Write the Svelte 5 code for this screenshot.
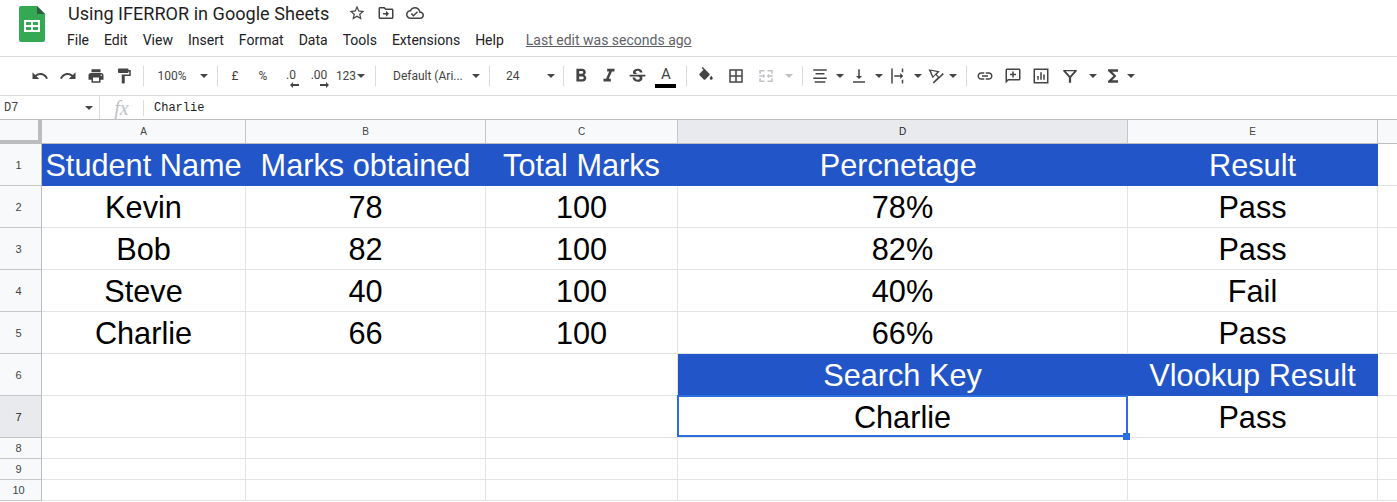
<script>
  const menus = ["File", "Edit", "View", "Insert", "Format", "Data", "Tools", "Extensions", "Help"];

  const paths = {
    undo: "M12.5 8c-2.65 0-5.05.99-6.9 2.6L2 7v9h9l-3.62-3.62c1.39-1.16 3.16-1.88 5.12-1.88 3.54 0 6.55 2.31 7.6 5.5l2.37-.78C21.08 11.03 17.15 8 12.5 8z",
    redo: "M18.4 10.6C16.55 8.99 14.15 8 11.5 8c-4.65 0-8.58 3.03-9.96 7.22L3.9 16c1.05-3.19 4.05-5.5 7.6-5.5 1.95 0 3.73.72 5.12 1.88L13 16h9V7l-3.6 3.6z",
    print: "M19 8H5c-1.66 0-3 1.34-3 3v6h4v4h12v-4h4v-6c0-1.66-1.34-3-3-3zm-3 11H8v-5h8v5zm3-7c-.55 0-1-.45-1-1s.45-1 1-1 1 .45 1 1-.45 1-1 1zm-1-9H6v4h12V3z",
    paint: "M18 4V3c0-.55-.45-1-1-1H5c-.55 0-1 .45-1 1v4c0 .55.45 1 1 1h12c.55 0 1-.45 1-1V6h1v4H9v11c0 .55.45 1 1 1h2c.55 0 1-.45 1-1v-9h8V4h-3z",
    bold: "M15.6 10.79c.97-.67 1.65-1.77 1.65-2.79 0-2.26-1.75-4-4-4H7v14h7.04c2.09 0 3.71-1.7 3.71-3.79 0-1.52-.86-2.82-2.15-3.42zM10 6.5h3c.83 0 1.5.67 1.5 1.5s-.67 1.5-1.5 1.5h-3v-3zm3.5 9H10v-3h3.5c.83 0 1.5.67 1.5 1.5s-.67 1.5-1.5 1.5z",
    italic: "M10 4v3h2.21l-3.42 8H6v3h8v-3h-2.21l3.42-8H18V4z",
    strike: "M6.85 7.08C6.85 4.37 9.45 3 12.24 3c1.64 0 3 .49 3.9 1.28.77.65 1.46 1.73 1.46 3.24h-3.01c0-.31-.05-.59-.15-.85-.29-.86-1.2-1.28-2.25-1.28-1.86 0-2.34 1.02-2.34 1.7 0 .48.25.88.74 1.21.38.25.77.48 1.41.7H7.39c-.21-.34-.54-.89-.54-1.92zM21 12v-2H3v2h9.62c1.15.45 1.96.75 1.96 1.97 0 1-.81 1.67-2.28 1.67-1.54 0-2.93-.54-2.93-2.51H6.4c0 .55.08 1.13.24 1.58.81 2.29 3.29 3.3 5.67 3.3 2.27 0 5.3-.89 5.3-4.05 0-.3-.01-1.16-.48-1.94H21V12z",
    fill: "M16.56 8.94L7.62 0 6.21 1.41l2.38 2.38-5.15 5.15c-.59.59-.59 1.54 0 2.12l5.5 5.5c.29.29.68.44 1.06.44s.77-.15 1.06-.44l5.5-5.5c.59-.58.59-1.53 0-2.12zM19 11.5s-2 2.17-2 3.5c0 1.1.9 2 2 2s2-.9 2-2c0-1.33-2-3.5-2-3.5z",
    borders: "M3 3v18h18V3H3zm8 16H5v-6h6v6zm0-8H5V5h6v6zm8 8h-6v-6h6v6zm0-8h-6V5h6v6z",
    merge: "M3 4h7v2H5v3H3zM14 4h7v5h-2V6h-5zM3 15h2v3h5v2H3zM19 15h2v5h-7v-2h5zM3 11h5V9l3 3-3 3v-2H3zM21 11h-5V9l-3 3 3 3v-2h5z",
    align: "M3 3h18v2H3zM6 8h12v2H6zM3 14h18v2H3zM5 19h14v2H5z",
    valign: "M4 19h16v2H4zM13 3h-2v9H8l4 4 4-4h-3z",
    wrap: "M3 2h2v20H3zM17 2h2v5h-2zM17 17h2v5h-2zM17 10h0zM7 11h8V8l4 4-4 4v-3H7z",
    rotate: "M2 3l15 2.5-4 4.5 3 3 5-5 1.5 1.5L9 22l-1.5-1.5 7-7-3-3L7.5 15zM5.3 5l2.9 7.3 2.6-3 .2-.3 2.6-2.4z",
    link: "M3.9 12c0-1.71 1.39-3.1 3.1-3.1h4V7H7c-2.76 0-5 2.24-5 5s2.24 5 5 5h4v-1.9H7c-1.71 0-3.1-1.39-3.1-3.1zM8 13h8v-2H8v2zm9-6h-4v1.9h4c1.71 0 3.1 1.39 3.1 3.1s-1.39 3.1-3.1 3.1h-4V17h4c2.76 0 5-2.24 5-5s-2.24-5-5-5z",
    comment: "M4 2h16c1.1 0 2 .9 2 2v12c0 1.1-.9 2-2 2H6l-4 4V4c0-1.1.9-2 2-2zm0 2v13.2L5.2 16H20V4zM11 6h2v3h3v2h-3v3h-2v-3H8V9h3z",
    chart: "M2 2h20v20H2zm2 2v16h16V4zM7 12h2v5H7zM11 7h2v10h-2zM15 10h2v7h-2z",
    filter: "M3 4h18v1.5l-7.5 8.5v7h-3v-7L3 5.5zm3.4 1.5L12 12l5.6-6.5z",
    sigma: "M18 4H6v2l6.5 6L6 18v2h12v-3h-7l5-5-5-5h7z"
  };

  // x advance of every toolbar slot, in order, left to right
  const tools = [
    { k: "icon", w: 28, p: "undo" },
    { k: "icon", w: 28, p: "redo" },
    { k: "icon", w: 28, p: "print" },
    { k: "icon", w: 28, p: "paint" },
    { k: "sep", w: 11 },
    { k: "text", w: 46, t: "100%" },
    { k: "caret", w: 18 },
    { k: "sep", w: 8 },
    { k: "text", w: 28, t: "£" },
    { k: "text", w: 28, t: "%" },
    { k: "dec", w: 28, t: ".0", dir: "left" },
    { k: "dec", w: 28, t: ".00", dir: "right" },
    { k: "text", w: 26, t: "123" },
    { k: "caret", w: 4 },
    { k: "sep", w: 25 },
    { k: "font", w: 78, t: "Default (Ari..." },
    { k: "caret", w: 19 },
    { k: "sep", w: 9 },
    { k: "font size", w: 47, t: "24" },
    { k: "caret", w: 19 },
    { k: "sep", w: 7 },
    { k: "icon", w: 28, p: "bold", s: 22 },
    { k: "icon", w: 28, p: "italic", s: 22 },
    { k: "icon", w: 28, p: "strike", s: 21 },
    { k: "color", w: 30 },
    { k: "sep", w: 10 },
    { k: "icon", w: 30, p: "fill" },
    { k: "icon", w: 30, p: "borders" },
    { k: "icon off", w: 30, p: "merge" },
    { k: "caret off", w: 16 },
    { k: "sep", w: 11 },
    { k: "icon", w: 24, p: "align" },
    { k: "caret", w: 15 },
    { k: "icon", w: 24, p: "valign" },
    { k: "caret", w: 15 },
    { k: "icon", w: 24, p: "wrap" },
    { k: "caret", w: 15 },
    { k: "icon", w: 22, p: "rotate" },
    { k: "caret", w: 11 },
    { k: "sep", w: 17 },
    { k: "icon", w: 20, p: "link" },
    { k: "icon", w: 36, p: "comment" },
    { k: "icon", w: 20, p: "chart" },
    { k: "icon", w: 38, p: "filter" },
    { k: "caret", w: 8 },
    { k: "icon", w: 32, p: "sigma", s: 20 },
    { k: "caret", w: 4 }
  ];

  const columns = ["A", "B", "C", "D", "E", ""];

  const rows = [
    { cells: ["Student Name", "Marks obtained", "Total Marks", "Percnetage ", "Result"], blue: [0, 1, 2, 3, 4] },
    { cells: ["Kevin", "78", "100", "78%", "Pass"], blue: [] },
    { cells: ["Bob", "82", "100", "82%", "Pass"], blue: [] },
    { cells: ["Steve", "40", "100", "40%", "Fail"], blue: [] },
    { cells: ["Charlie", "66", "100", "66%", "Pass"], blue: [] },
    { cells: ["", "", "", "Search Key", "Vlookup Result"], blue: [3, 4] },
    { cells: ["", "", "", "Charlie", "Pass"], blue: [] },
    { cells: ["", "", "", "", ""], blue: [] },
    { cells: ["", "", "", "", ""], blue: [] },
    { cells: ["", "", "", "", ""], blue: [] }
  ];
</script>

{#snippet icon(d, size = 18)}
  <svg width={size} height={size} viewBox="0 0 24 24" fill="currentColor"><path d={d} fill-rule="evenodd" /></svg>
{/snippet}

<div class="page">
  <header class="top">
    <svg class="logo" width="26" height="36" viewBox="0 0 26 36">
      <path d="M2 0h16l8 8v26a2 2 0 0 1-2 2H2a2 2 0 0 1-2-2V2a2 2 0 0 1 2-2z" fill="#34a853" />
      <path d="M18 0l8 8h-8z" fill="#2d5f3f" />
      <path d="M5 14h16v12H5zm2 2v3h5v-3zm7 0v3h5v-3zm-7 5v3h5v-3zm7 0v3h5v-3z" fill="#fff" fill-rule="evenodd" />
    </svg>
    <div class="titles">
      <div class="title-row">
        <span class="title">Using IFERROR in Google Sheets</span>
        <span class="doc-icons">
          {@render icon("M22 9.24l-7.19-.62L12 2 9.19 8.63 2 9.24l5.46 4.73L5.82 21 12 17.27 18.18 21l-1.63-7.03L22 9.24zM12 15.4l-3.76 2.27 1-4.28-3.32-2.88 4.38-.38L12 6.1l1.71 4.04 4.38.38-3.32 2.88 1 4.28L12 15.4z")}
          {@render icon("M20 6h-8l-2-2H4c-1.1 0-2 .9-2 2v12c0 1.1.9 2 2 2h16c1.1 0 2-.9 2-2V8c0-1.1-.9-2-2-2zm0 12H4V6h5.17l2 2H20v10zm-8-4H8v-2h4V9l4 4-4 4v-3z")}
          {@render icon("M19.35 10.04C18.67 6.59 15.64 4 12 4 9.11 4 6.6 5.64 5.35 8.04 2.34 8.36 0 10.91 0 14c0 3.31 2.69 6 6 6h13c2.76 0 5-2.24 5-5 0-2.64-2.05-4.78-4.65-4.96zM19 18H6c-2.21 0-4-1.79-4-4 0-2.05 1.53-3.76 3.56-3.97l1.07-.11.5-.95C8.08 7.14 9.94 6 12 6c2.62 0 4.88 1.86 5.39 4.43l.3 1.5 1.53.11c1.56.1 2.78 1.41 2.78 2.96 0 1.65-1.35 3-3 3zm-9-3.82l-2.09-2.09L6.5 13.5 10 17l6.01-6.01-1.41-1.41z")}
        </span>
      </div>
      <nav class="menu">
        {#each menus as m}
          <span>{m}</span>
        {/each}
        <span class="last-edit">Last edit was seconds ago</span>
      </nav>
    </div>
  </header>

  <div class="toolbar">
    {#each tools as t}
      <div class="slot {t.k}" style="width:{t.w}px">
        {#if t.k.startsWith("icon")}
          {@render icon(paths[t.p], t.s)}
        {:else if t.k.startsWith("caret")}
          <i class="tri"></i>
        {:else if t.k === "color"}
          <span class="a">A</span>
          <span class="bar"></span>
        {:else if t.k === "dec"}
          <span class="dec-t">{t.t}</span>
          <svg class="arrow {t.dir}" width="9" height="6" viewBox="0 0 9 6" fill="currentColor">
            {#if t.dir === "left"}
              <path d="M0 3l3-3v2h6v2H3v2z" />
            {:else}
              <path d="M9 3L6 0v2H0v2h6v2z" />
            {/if}
          </svg>
        {:else if t.k !== "sep"}
          {t.t}
        {/if}
      </div>
    {/each}
  </div>

  <div class="formula">
    <div class="name">D7<i class="tri"></i></div>
    <div class="fx">fx</div>
    <div class="value">Charlie</div>
  </div>

  <div class="sheet">
    <div class="corner"></div>
    {#each columns as c}
      <div class="col-head" class:picked={c === "D"}>{c}</div>
    {/each}

    {#each rows as row, r}
      <div class="row-head" class:picked={r === 6}>{r + 1}</div>
      {#each row.cells as cell, c}
        <div class="cell" class:blue={row.blue.includes(c)} class:selected={r === 6 && c === 3}>{cell}</div>
      {/each}
      <div class="cell"></div>
    {/each}
  </div>
</div>

<style>
  :global(body) {
    margin: 0;
    background: #fff;
  }

  .page {
    height: 502px;
    overflow: hidden;
    font-family: Roboto, "Liberation Sans", sans-serif;
    color: #3c4043;
  }

  .top {
    display: flex;
    height: 57px;
    box-sizing: border-box;
    border-bottom: 1px solid #dadce0;
    padding: 6px 0 0 19px;
  }
  .logo {
    flex: none;
  }
  .titles {
    margin-left: 23px;
    margin-top: -4px;
  }
  .title-row {
    display: flex;
    align-items: center;
    height: 22px;
  }
  .title {
    font-size: 18.1px;
    color: #1f1f1f;
    width: 280px;
    white-space: nowrap;
  }
  .doc-icons {
    display: flex;
    gap: 11px;
    color: #444;
  }
  .menu {
    display: flex;
    gap: 15px;
    margin-top: 8px;
    font-size: 14px;
    line-height: 16px;
    color: #202124;
    margin-left: -1px;
  }
  .last-edit {
    margin-left: 7px;
    color: #5f6368;
    text-decoration: underline;
  }

  .toolbar {
    display: flex;
    align-items: center;
    height: 39px;
    box-sizing: border-box;
    border-bottom: 1px solid #dadce0;
    padding-left: 26px;
    color: #444;
    font-size: 12px;
  }
  .slot {
    flex: none;
    position: relative;
    height: 38px;
    display: flex;
    align-items: center;
    justify-content: center;
  }
  .sep::after {
    content: "";
    width: 1px;
    height: 20px;
    background: #dadce0;
  }
  .off {
    color: #bdc1c6;
  }
  .font {
    justify-content: flex-start;
    padding-left: 5px;
    box-sizing: border-box;
    white-space: nowrap;
  }
  .size {
    padding-left: 12px;
  }
  .tri {
    display: block;
    flex: none;
    width: 0;
    height: 0;
    border: 4px solid transparent;
    border-top-color: currentColor;
    border-bottom: 0;
  }
  .color {
    flex-direction: column;
  }
  .a {
    font-size: 15px;
    line-height: 15px;
    margin-top: -4px;
  }
  .bar {
    width: 21px;
    height: 4px;
    background: #000;
    position: absolute;
    top: 27px;
    left: 4px;
  }
  .dec-t {
    margin-top: -2px;
  }
  .arrow {
    position: absolute;
    top: 25px;
  }
  .arrow.left {
    left: 13px;
  }
  .arrow.right {
    left: 15px;
  }

  .formula {
    display: flex;
    align-items: center;
    height: 24px;
    box-sizing: border-box;
    border-bottom: 1px solid #bdbdbd;
    font-family: "Liberation Mono", monospace;
    font-size: 12px;
    color: #202124;
  }
  .name {
    width: 100px;
    height: 23px;
    box-sizing: border-box;
    border-right: 1px solid #dadce0;
    display: flex;
    align-items: center;
    justify-content: space-between;
    padding: 0 6px 0 4px;
    color: #444;
  }
  .fx {
    width: 44px;
    height: 16px;
    box-sizing: border-box;
    border-right: 1px solid #dadce0;
    text-align: center;
    font: italic 20px/16px "Liberation Serif", serif;
    color: #bdc1c6;
  }
  .value {
    padding-left: 10px;
  }

  .sheet {
    display: grid;
    grid-template-columns: 42px 204px 240px 192px 450px 250px 40px;
    grid-template-rows: 24px repeat(7, 42px) repeat(3, 21px);
    font-family: "Liberation Sans", Arial, sans-serif;
  }
  .corner {
    box-sizing: border-box;
    background: #f8f9fa;
    border-right: 4px solid #bdbdbd;
    border-bottom: 4px solid #bdbdbd;
  }
  .col-head {
    display: flex;
    align-items: center;
    justify-content: center;
    box-sizing: border-box;
    background: #f8f9fa;
    border-right: 1px solid #c4c7c5;
    border-bottom: 1px solid #bdbdbd;
    font-size: 10px;
    color: #444;
  }
  .row-head {
    display: flex;
    align-items: center;
    justify-content: center;
    box-sizing: border-box;
    background: #f8f9fa;
    border-right: 1px solid #bdbdbd;
    border-bottom: 1px solid #c4c7c5;
    font-size: 11px;
    color: #444;
    padding-right: 4px;
  }
  .picked {
    background: #e8eaed;
    color: #202124;
  }
  .cell {
    display: flex;
    align-items: center;
    justify-content: center;
    box-sizing: border-box;
    position: relative;
    padding-top: 2px;
    border-right: 1px solid #e2e3e3;
    border-bottom: 1px solid #e2e3e3;
    font-size: 30.7px;
    color: #000;
    white-space: pre;
  }
  .blue {
    background: #2255c8;
    border-color: #2255c8;
    color: #fff;
  }
  .selected::before {
    content: "";
    position: absolute;
    top: -1px;
    left: -1px;
    right: -1px;
    bottom: 0;
    border: 2px solid #2b6fde;
  }
  .selected::after {
    content: "";
    position: absolute;
    right: -3px;
    bottom: -3px;
    width: 7px;
    height: 7px;
    background: #2b6fde;
    z-index: 1;
  }
</style>
